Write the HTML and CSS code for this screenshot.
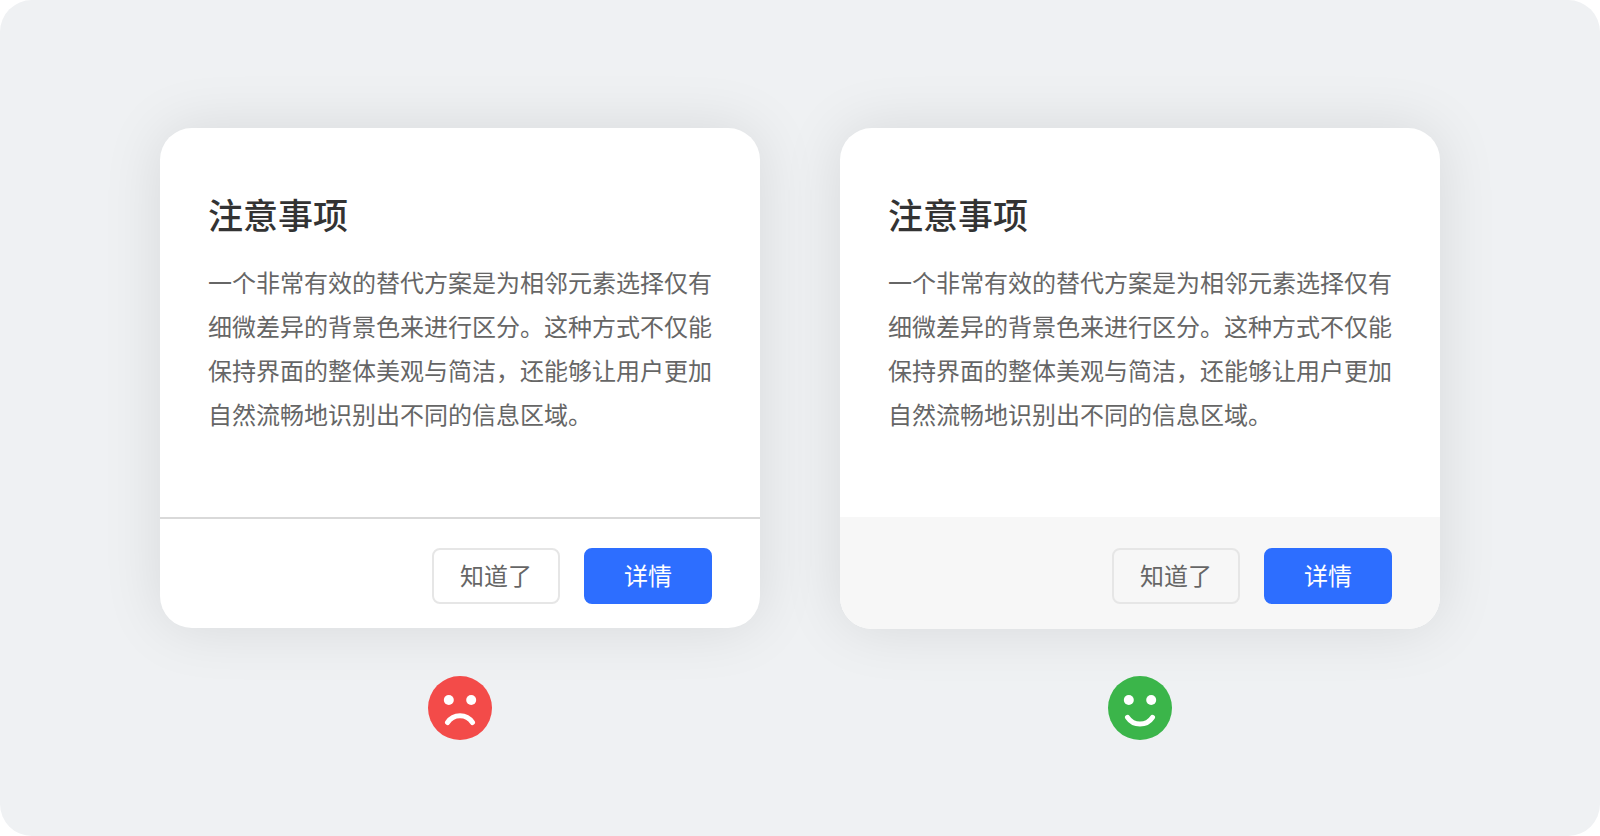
FILE: index.html
```html
<!DOCTYPE html>
<html lang="zh-CN">
<head>
<meta charset="utf-8">
<meta name="viewport" content="width=device-width, initial-scale=1">
<title>注意事项</title>
<link rel="stylesheet" href="styles.css">
</head>
<body>
<main class="stage">
  <article class="card">
    <div class="card-body">
      <h2 class="card-title">注意事项</h2>
      <p class="card-text">一个非常有效的替代方案是为相邻元素选择仅有细微差异的背景色来进行区分。这种方式不仅能保持界面的整体美观与简洁，还能够让用户更加自然流畅地识别出不同的信息区域。</p>
    </div>
    <footer class="card-footer card-footer-line">
      <button class="button" type="button">知道了</button>
      <button class="button button-primary" type="button">详情</button>
    </footer>
  </article>
  <article class="card">
    <div class="card-body">
      <h2 class="card-title">注意事项</h2>
      <p class="card-text">一个非常有效的替代方案是为相邻元素选择仅有细微差异的背景色来进行区分。这种方式不仅能保持界面的整体美观与简洁，还能够让用户更加自然流畅地识别出不同的信息区域。</p>
    </div>
    <footer class="card-footer card-footer-tint">
      <button class="button" type="button">知道了</button>
      <button class="button button-primary" type="button">详情</button>
    </footer>
  </article>
  <svg class="face face-sad" viewBox="0 0 64 64" aria-hidden="true">
    <circle cx="32" cy="32" r="32" fill="currentColor"/>
    <circle class="eye" cx="20.8" cy="24" r="5"/>
    <circle class="eye" cx="43.2" cy="24" r="5"/>
    <path class="mouth" d="M19.5 46.5A15 15 0 0 1 44.5 46.5"/>
  </svg>
  <svg class="face face-happy" viewBox="0 0 64 64" aria-hidden="true">
    <circle cx="32" cy="32" r="32" fill="currentColor"/>
    <circle class="eye" cx="20.8" cy="24" r="5"/>
    <circle class="eye" cx="43.2" cy="24" r="5"/>
    <path class="mouth" d="M19.5 41.3A15 15 0 0 0 44.5 41.3"/>
  </svg>
</main>
</body>
</html>
```

FILE: styles.css
```css
* {
  box-sizing: border-box;
}

body {
  margin: 0;
  background: #fff;
  font-family: "Noto Sans CJK SC", sans-serif;
}

.stage {
  display: grid;
  grid-template-columns: 1fr 1fr;
  align-content: start;
  align-items: start;
  gap: 47px 80px;
  min-height: 100vh;
  padding: 128px 160px 96px;
  border-radius: 32px;
  background: #eff1f3;
}

.card {
  border-radius: 32px;
  background: #fff;
  box-shadow: 0 0 60px rgba(0, 0, 0, 0.1);
}

.card-body {
  padding: 64px 48px 81px;
}

.card-title {
  margin: 0 0 24px;
  color: #333;
  font-size: 35px;
  font-weight: 500;
  line-height: 44px;
}

.card-text {
  margin: 0;
  color: #666;
  font-size: 24px;
  font-weight: 400;
  line-height: 44px;
  text-align: justify;
}

.card-footer {
  display: flex;
  justify-content: flex-end;
  gap: 24px;
}

.card-footer-line {
  padding: 29px 48px 24px;
  border-top: 2px solid #d9d9d9;
}

.card-footer-tint {
  padding: 31px 48px 25px;
  border-radius: 0 0 32px 32px;
  background: #f7f7f7;
}

.button {
  width: 128px;
  height: 56px;
  padding: 0 0 3px;
  border: 2px solid #e6e6e6;
  border-radius: 8px;
  background: transparent;
  color: #666;
  font-family: inherit;
  font-size: 24px;
  font-weight: 400;
  line-height: 32px;
  cursor: pointer;
}

.button-primary {
  border-color: #2d6eff;
  background: #2d6eff;
  color: #fff;
}

.face {
  justify-self: center;
  width: 64px;
  height: 64px;
}

.face-sad {
  color: #f34b49;
}

.face-happy {
  color: #3bb54a;
}

.eye {
  fill: #fff;
}

.mouth {
  fill: none;
  stroke: #fff;
  stroke-width: 5;
  stroke-linecap: round;
}
```
